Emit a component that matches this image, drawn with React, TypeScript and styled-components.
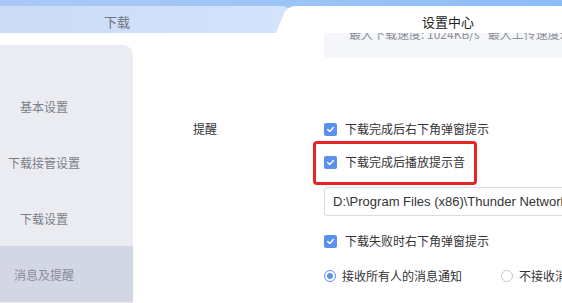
import React from "react";
import styled, { createGlobalStyle } from "styled-components";

const Global = createGlobalStyle`
  html, body { margin: 0; padding: 0; background: #fff; }
  body {
    width: 562px;
    height: 303px;
    overflow: hidden;
    font-family: "Noto Sans CJK SC", "Noto Sans", sans-serif;
  }
  * { box-sizing: border-box; }
`;

const Page = styled.div`
  width: 562px;
  height: 303px;
  overflow: hidden;
  background: #fff;
  display: flex;
  flex-direction: column;
`;

const Header = styled.div`
  height: 33px;
  flex-shrink: 0;
  display: flex;
  align-items: flex-end;
  background: linear-gradient(90deg, #abc9f6 0%, #9dc4f7 50%, #8dbcf8 100%);
  overflow: hidden;
`;

const LeftTab = styled.div`
  flex: 0 0 290px;
  height: 27px;
  padding: 3px 56px 0 0;
  display: flex;
  align-items: center;
  justify-content: center;
  background: linear-gradient(90deg, #cbdbf6 0%, #d2e3fc 100%);
  border-top-right-radius: 8px;
  font-size: 13px;
  color: #70747d;
`;

const RightTab = styled.div`
  flex: 1;
  margin-left: -14px;
  height: 27px;
  padding: 3px 0 0 58px;
  position: relative;
  z-index: 1;
  display: flex;
  align-items: center;
  justify-content: center;
  font-size: 13px;
  color: #222;
  &::before {
    content: "";
    position: absolute;
    top: 0;
    bottom: 0;
    left: 0;
    right: -40px;
    background: #fff;
    border-top-left-radius: 8px;
    transform: skewX(-22deg);
    transform-origin: bottom left;
    z-index: -1;
  }
`;

const Body = styled.div`
  flex: 1;
  display: flex;
  overflow: hidden;
`;

const Sidebar = styled.nav`
  flex: 0 0 133px;
  margin-top: 12px;
  padding-top: 33px;
  background: #ebecf1;
  border-top-right-radius: 10px;
  display: flex;
  flex-direction: column;
`;

const NavItem = styled.div<{ $active?: boolean }>`
  height: 56px;
  padding-right: 45px;
  display: flex;
  align-items: center;
  justify-content: center;
  font-size: 12px;
  white-space: nowrap;
  color: ${(p) => (p.$active ? "#8a8d98" : "#7b7e87")};
  background: ${(p) => (p.$active ? "#d2d6e5" : "transparent")};
`;

const Main = styled.div`
  flex: 1;
  min-width: 0;
  margin-top: -19px;
  padding-left: 60px;
  display: grid;
  grid-template-columns: 131px 1fr;
  align-content: start;
`;

const SpeedBox = styled.div`
  grid-column: 2;
  width: 320px;
  height: 44px;
  padding: 11px 0 0 25px;
  background: #f5f6f9;
  border-radius: 4px;
  font-size: 12px;
  line-height: 18px;
  color: #8d9099;
  white-space: nowrap;
  overflow: hidden;
`;

const Label = styled.div`
  margin-top: 61px;
  font-size: 12px;
  line-height: 20px;
  color: #333;
`;

const Options = styled.div`
  margin-top: 61px;
  display: flex;
  flex-direction: column;
`;

const CheckRow = styled.div<{ $gap?: number }>`
  position: relative;
  height: 20px;
  margin-top: ${(p) => p.$gap ?? 0}px;
  display: flex;
  align-items: center;
  gap: 8px;
  font-size: 12px;
  line-height: 20px;
  color: #333;
  white-space: nowrap;
`;

const Box = styled.span`
  width: 13px;
  height: 13px;
  flex-shrink: 0;
  border-radius: 2px;
  background: #5b8ff0;
  display: flex;
  align-items: center;
  justify-content: center;
`;

const Highlight = styled.div`
  position: absolute;
  top: -11px;
  left: -11px;
  width: 164px;
  height: 44px;
  border: 3px solid #e32626;
  border-radius: 4px;
  pointer-events: none;
`;

const PathInput = styled.input`
  margin-top: 15px;
  width: 320px;
  height: 29px;
  padding: 0 0 0 8px;
  border: 1px solid #d9dce3;
  border-radius: 3px;
  background: #fff;
  font-family: "Liberation Sans", Arial, sans-serif;
  font-size: 13px;
  color: #333;
  outline: none;
`;

const RadioRow = styled.div`
  margin-top: 14px;
  height: 21px;
  display: flex;
  align-items: center;
  font-size: 12px;
  color: #333;
  white-space: nowrap;
`;

const RadioOption = styled.label<{ $offset?: number }>`
  display: flex;
  align-items: center;
  gap: 6px;
  margin-left: ${(p) => p.$offset ?? 0}px;
`;

const RadioDot = styled.span<{ $on?: boolean }>`
  width: 12px;
  height: 12px;
  border-radius: 50%;
  flex-shrink: 0;
  border: 1px solid ${(p) => (p.$on ? "#5b8ff0" : "#c3c6cd")};
  background: #fff;
  display: flex;
  align-items: center;
  justify-content: center;
  &::after {
    content: "";
    width: 6px;
    height: 6px;
    border-radius: 50%;
    background: ${(p) => (p.$on ? "#5b8ff0" : "transparent")};
  }
`;

const Check = () => (
  <Box>
    <svg width="9" height="9" viewBox="0 0 9 9">
      <path d="M1.6 4.6 L3.7 6.6 L7.4 2.6" fill="none" stroke="#fff" strokeWidth="1.4" strokeLinecap="round" strokeLinejoin="round" />
    </svg>
  </Box>
);

export default function App() {
  return (
    <Page>
      <Global />
      <Header>
        <LeftTab>下载</LeftTab>
        <RightTab>设置中心</RightTab>
      </Header>
      <Body>
        <Sidebar>
          <NavItem>基本设置</NavItem>
          <NavItem>下载接管设置</NavItem>
          <NavItem>下载设置</NavItem>
          <NavItem $active>消息及提醒</NavItem>
        </Sidebar>
        <Main>
          <SpeedBox>最大下载速度: 1024KB/s&nbsp;&nbsp;&nbsp;最大上传速度: 1024KB/s</SpeedBox>
          <Label>提醒</Label>
          <Options>
            <CheckRow>
              <Check />
              下载完成后右下角弹窗提示
            </CheckRow>
            <CheckRow $gap={13}>
              <Check />
              下载完成后播放提示音
              <Highlight />
            </CheckRow>
            <PathInput readOnly value="D:\Program Files (x86)\Thunder Network\Thunder\Sound\complete.wav" />
            <CheckRow $gap={15}>
              <Check />
              下载失败时右下角弹窗提示
            </CheckRow>
            <RadioRow>
              <RadioOption>
                <RadioDot $on />
                接收所有人的消息通知
              </RadioOption>
              <RadioOption $offset={39}>
                <RadioDot />
                不接收消息通知
              </RadioOption>
            </RadioRow>
          </Options>
        </Main>
      </Body>
    </Page>
  );
}
